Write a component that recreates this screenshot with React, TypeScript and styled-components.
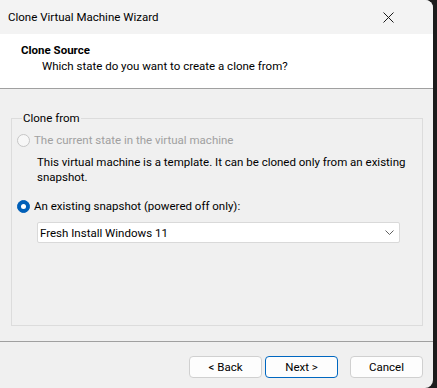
import React from "react"
import styled, { createGlobalStyle } from "styled-components"

const GlobalStyle = createGlobalStyle`
  html, body {
    margin: 0;
    padding: 0;
    background: #1c1c1c;
  }
  body {
    font-family: Roboto, "Noto Sans", "Liberation Sans", sans-serif;
    font-size: 11.5px;
    color: #000;
  }
`

const WindowSt = styled.div`
  width: 433px;
  height: 388px;
  background: #f0f0f0;
  border-radius: 0 8px 8px 0;
  overflow: hidden;
  display: flex;
  flex-direction: column;
`

const TitleBarSt = styled.div`
  height: 34px;
  flex: none;
  background: #f3f3f3;
  display: flex;
  align-items: center;
  justify-content: space-between;
  padding-left: 8px;
  padding-right: 39px;
`

const TitleTextSt = styled.div`
  line-height: 16px;
`

const HeaderSt = styled.div`
  height: 55px;
  flex: none;
  background: #ffffff;
  border-bottom: 1px solid #a0a0a0;
  padding: 8px 0 0 21px;
  box-sizing: border-box;
`

const HeaderTitleSt = styled.div`
  font-weight: bold;
  line-height: 16px;
`

const HeaderSubSt = styled.div`
  padding-left: 21px;
  line-height: 16px;
`

const BodySt = styled.div`
  flex: 1;
  padding: 21px 10px 15px 11px;
  display: flex;
  flex-direction: column;
`

const GroupSt = styled.fieldset`
  margin: 0;
  flex: 1;
  border: 1px solid #dcdcdc;
  padding: 6px 0 0 5px;
  display: flex;
  flex-direction: column;
`

const LegendSt = styled.legend`
  padding: 0 1px;
  margin-left: 5px;
  line-height: 16px;
`

const RadioRowSt = styled.div<{ $disabled?: boolean; $top?: number }>`
  display: flex;
  align-items: center;
  gap: 4px;
  height: 16px;
  margin-top: ${p => p.$top ?? 0}px;
  color: ${p => (p.$disabled ? "#a0a0a0" : "#000")};
`

const RadioDotSt = styled.span<{ $checked?: boolean; $disabled?: boolean }>`
  width: 13px;
  height: 13px;
  box-sizing: border-box;
  border-radius: 50%;
  flex: none;
  position: relative;
  background: ${p => (p.$checked ? "#005fb8" : "#f7f7f7")};
  border: 1px solid ${p => (p.$checked ? "#005fb8" : p.$disabled ? "#c6c6c6" : "#868686")};
  &::after {
    content: "";
    display: ${p => (p.$checked ? "block" : "none")};
    position: absolute;
    left: 3px;
    top: 3px;
    width: 5px;
    height: 5px;
    border-radius: 50%;
    background: #fff;
  }
`

const NoteSt = styled.div`
  margin: 7px 0 0 20px;
  line-height: 15px;
  width: 385px;
`

const ComboSt = styled.div`
  margin: 8px 0 0 20px;
  width: 363px;
  height: 21px;
  box-sizing: border-box;
  background: #fff;
  border: 1px solid #d9d9d9;
  border-radius: 2px;
  display: flex;
  align-items: center;
  justify-content: space-between;
  padding: 0 5px 0 2px;
`

const FooterSt = styled.div`
  height: 47px;
  flex: none;
  border-top: 1px solid #a0a0a0;
  display: flex;
  align-items: flex-start;
  padding: 14px 10px 0 0;
  box-sizing: border-box;
  justify-content: flex-end;
`

const ButtonSt = styled.button<{ $default?: boolean; $gap?: number }>`
  width: 73px;
  height: 22px;
  margin-left: ${p => p.$gap ?? 0}px;
  font-family: inherit;
  font-size: 11.5px;
  color: #000;
  background: #fdfdfd;
  border: 1px solid ${p => (p.$default ? "#0067c0" : "#d0d0d0")};
  border-radius: 4px;
  padding: 0;
`

const CloseIcon = () => (
  <svg width="11" height="11" viewBox="0 0 11 11">
    <path d="M0.5 0.5 L10.5 10.5 M10.5 0.5 L0.5 10.5" stroke="#1a1a1a" strokeWidth="1" fill="none" />
  </svg>
)

const ChevronIcon = () => (
  <svg width="9" height="5" viewBox="0 0 9 5">
    <path d="M0.5 0.5 L4.5 4.5 L8.5 0.5" stroke="#606060" strokeWidth="1" fill="none" />
  </svg>
)

export default function App() {
  return <>
    <GlobalStyle />
    <WindowSt>
      <TitleBarSt>
        <TitleTextSt>Clone Virtual Machine Wizard</TitleTextSt>
        <CloseIcon />
      </TitleBarSt>
      <HeaderSt>
        <HeaderTitleSt>Clone Source</HeaderTitleSt>
        <HeaderSubSt>Which state do you want to create a clone from?</HeaderSubSt>
      </HeaderSt>
      <BodySt>
        <GroupSt>
          <LegendSt>Clone from</LegendSt>
          <RadioRowSt $disabled>
            <RadioDotSt $disabled />
            The current state in the virtual machine
          </RadioRowSt>
          <NoteSt>
            This virtual machine is a template. It can be cloned only from an existing snapshot.
          </NoteSt>
          <RadioRowSt $top={13}>
            <RadioDotSt $checked />
            An existing snapshot (powered off only):
          </RadioRowSt>
          <ComboSt>
            <span>Fresh Install Windows 11</span>
            <ChevronIcon />
          </ComboSt>
        </GroupSt>
      </BodySt>
      <FooterSt>
        <ButtonSt>&lt; Back</ButtonSt>
        <ButtonSt $default $gap={3}>Next &gt;</ButtonSt>
        <ButtonSt $gap={12}>Cancel</ButtonSt>
      </FooterSt>
    </WindowSt>
  </>
}
